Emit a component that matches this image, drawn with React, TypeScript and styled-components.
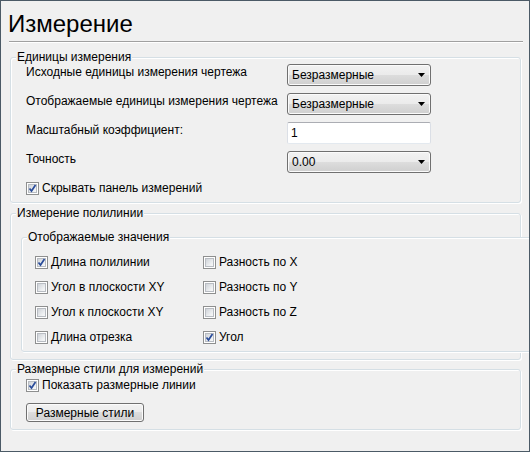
import styled, { createGlobalStyle } from "styled-components";

const GlobalStyle = createGlobalStyle`
  html, body {
    margin: 0;
    padding: 0;
    background: #f0f0f0;
  }
  body {
    font-family: "Liberation Sans", Arial, sans-serif;
    font-size: 12px;
    color: #000;
  }
`;

const Window = styled.div`
  box-sizing: border-box;
  width: 530px;
  height: 452px;
  border: 1px solid #4b5a66;
  background: #f0f0f0;
  padding: 0 6px 0 8px;
  overflow: hidden;
`;

const Title = styled.h1`
  margin: 8px 0 0 -1px;
  font-size: 24px;
  line-height: 30px;
  font-weight: normal;
`;

const Separator = styled.div`
  margin-top: 2px;
  height: 1px;
  background: #a0a0a0;
  border-bottom: 1px solid #ffffff;
`;

const Group = styled.div<{ $top: number; $inner?: boolean }>`
  margin: ${(p) => p.$top}px ${(p) => (p.$inner ? -12 : 2)}px 0 ${(p) => (p.$inner ? 10 : 1)}px;
  border: 1px solid #d5dfe5;
  border-radius: 3px;
  box-shadow: 1px 1px 0 #ffffff, inset 1px 1px 0 #ffffff;
  background: #f0f0f0;
`;

const Legend = styled.div`
  width: fit-content;
  margin: -8px 0 0 5px;
  padding: 0 1px;
  line-height: 15px;
  background: #f0f0f0;
`;

const Body = styled.div<{ $pad: string }>`
  padding: ${(p) => p.$pad};
`;

const FormGrid = styled.div`
  display: grid;
  grid-template-columns: 261px 144px;
  grid-auto-rows: 22px;
  row-gap: 7px;
  margin-top: -1px;
`;

const Label = styled.div`
  line-height: 15px;
  padding-top: 1px;
  white-space: nowrap;
`;

const Combo = styled.div`
  box-sizing: border-box;
  height: 22px;
  display: flex;
  align-items: center;
  justify-content: space-between;
  padding: 0 5px 0 4px;
  border: 1px solid #707070;
  border-radius: 3px;
  background: linear-gradient(#f2f2f2 0%, #ebebeb 50%, #dddddd 50%, #cfcfcf 100%);
  box-shadow: inset 0 0 0 1px #fbfbfb;
`;

const TextBox = styled.div`
  box-sizing: border-box;
  height: 22px;
  display: flex;
  align-items: center;
  padding-left: 3px;
  background: #ffffff;
  border: 1px solid #dbdfe6;
  border-top-color: #abadb3;
  border-bottom-color: #e3e9ef;
  border-radius: 2px;
`;

const Arrow = () => (
  <svg width="7" height="4" viewBox="0 0 7 4">
    <path d="M0 0 H7 L3.5 4 Z" fill="#000" />
  </svg>
);

const CheckRow = styled.div<{ $mt?: number }>`
  display: flex;
  align-items: center;
  gap: 3px;
  height: 16px;
  margin-top: ${(p) => p.$mt ?? 0}px;
  white-space: nowrap;
`;

const Box = styled.span`
  box-sizing: border-box;
  width: 13px;
  height: 13px;
  border: 1px solid #8e8f8f;
  background: #ffffff;
  padding: 1px;
  display: flex;
`;

const BoxInner = styled.span`
  flex: 1;
  border: 1px solid #b8bcc2;
  background: linear-gradient(135deg, #cfd3d8 0%, #eef0f2 70%, #f8f8f8 100%);
  display: flex;
  align-items: center;
  justify-content: center;
`;

const Check = () => (
  <svg width="9" height="9" viewBox="0 0 9 9" style={{ margin: -2 }}>
    <path d="M1.5 4.5 L3.5 7 L7.5 1" fill="none" stroke="#2a4c9a" strokeWidth="1.7" />
  </svg>
);

const CheckBox = ({ label, checked, mt }: { label: string; checked?: boolean; mt?: number }) => (
  <CheckRow $mt={mt}>
    <Box>
      <BoxInner>{checked && <Check />}</BoxInner>
    </Box>
    <span>{label}</span>
  </CheckRow>
);

const ValuesGrid = styled.div`
  display: grid;
  grid-template-columns: 168px 168px;
  grid-auto-rows: 16px;
  row-gap: 9px;
  margin-top: 9px;
`;

const Button = styled.div`
  box-sizing: border-box;
  width: 118px;
  height: 19px;
  margin-top: 10px;
  display: flex;
  align-items: center;
  justify-content: center;
  border: 1px solid #707070;
  border-radius: 3px;
  background: linear-gradient(#f2f2f2 0%, #ebebeb 50%, #dddddd 50%, #cfcfcf 100%);
  box-shadow: inset 0 0 0 1px #fbfbfb;
`;

const values: [string, boolean][] = [
  ["Длина полилинии", true],
  ["Разность по X", false],
  ["Угол в плоскости XY", false],
  ["Разность по Y", false],
  ["Угол к плоскости XY", false],
  ["Разность по Z", false],
  ["Длина отрезка", false],
  ["Угол", true],
];

export default function App() {
  return (
    <>
      <GlobalStyle />
      <Window>
        <Title>Измерение</Title>
        <Separator />

        <Group $top={14}>
          <Legend>Единицы измерения</Legend>
          <Body $pad="0 0 6px 15px">
            <FormGrid>
              <Label>Исходные единицы измерения чертежа</Label>
              <Combo>
                <span>Безразмерные</span>
                <Arrow />
              </Combo>
              <Label>Отображаемые единицы измерения чертежа</Label>
              <Combo>
                <span>Безразмерные</span>
                <Arrow />
              </Combo>
              <Label>Масштабный коэффициент:</Label>
              <TextBox>1</TextBox>
              <Label>Точность</Label>
              <Combo>
                <span>0.00</span>
                <Arrow />
              </Combo>
            </FormGrid>
            <CheckBox label="Скрывать панель измерений" checked mt={7} />
          </Body>
        </Group>

        <Group $top={10}>
          <Legend>Измерение полилинии</Legend>
          <Body $pad="16px 0 7px 0">
            <Group $top={0} $inner>
              <Legend>Отображаемые значения</Legend>
              <Body $pad="0 0 6px 13px">
                <ValuesGrid>
                  {values.map(([label, checked]) => (
                    <CheckBox key={label} label={label} checked={checked} />
                  ))}
                </ValuesGrid>
              </Body>
            </Group>
          </Body>
        </Group>

        <Group $top={9}>
          <Legend>Размерные стили для измерений</Legend>
          <Body $pad="0 0 7px 15px">
            <CheckBox label="Показать размерные линии" checked />
            <Button>Размерные стили</Button>
          </Body>
        </Group>
      </Window>
    </>
  );
}
